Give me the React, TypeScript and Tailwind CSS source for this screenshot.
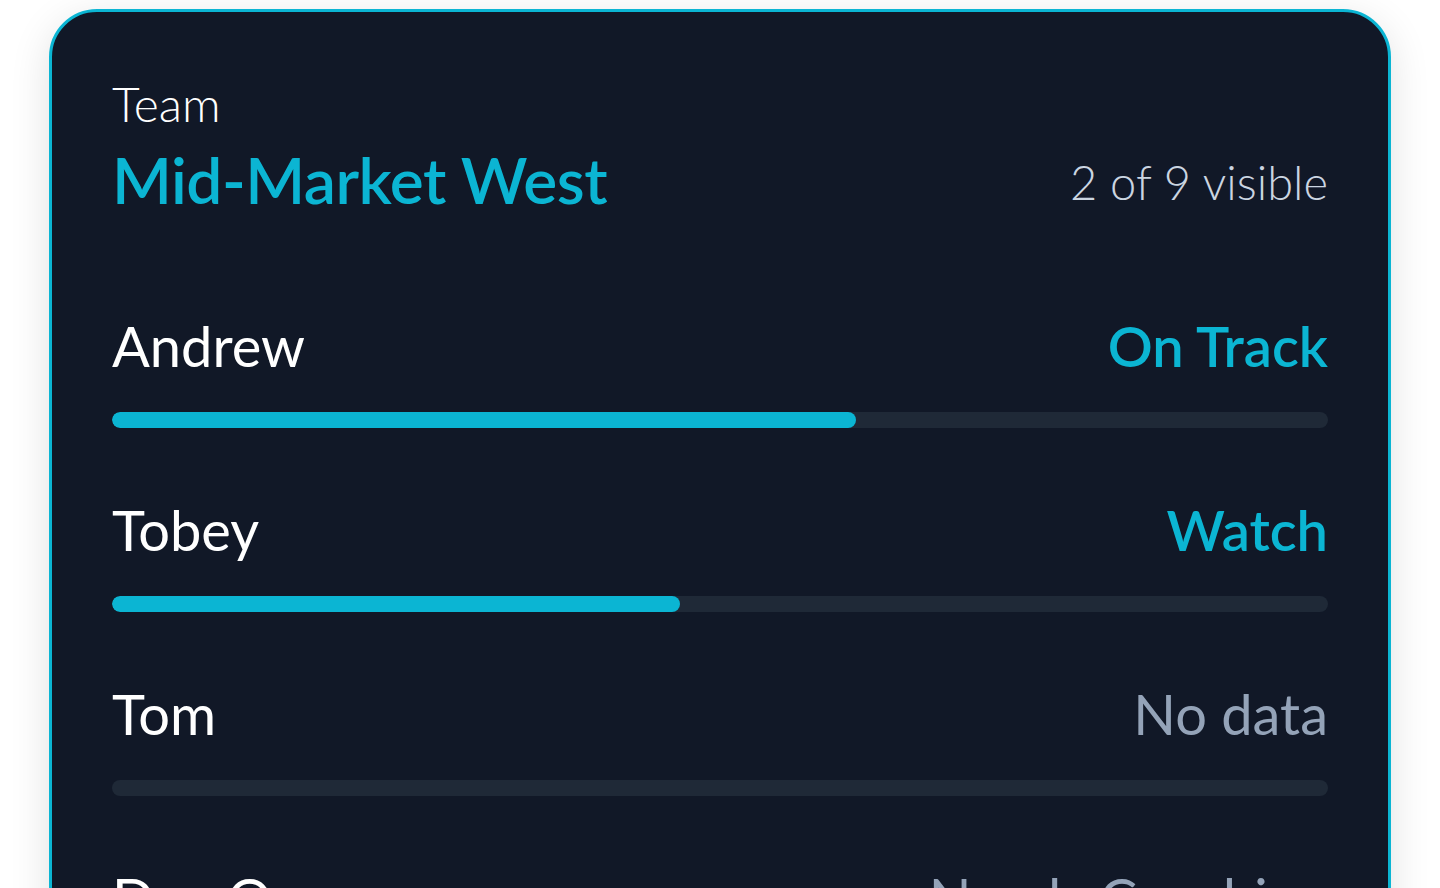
import React from "react";

type Row = { name: string; status: string; tone: "cyan" | "muted"; pct: number };

const rows: Row[] = [
  { name: "Andrew", status: "On Track", tone: "cyan", pct: 61.2 },
  { name: "Tobey", status: "Watch", tone: "cyan", pct: 46.7 },
  { name: "Tom", status: "No data", tone: "muted", pct: 0 },
  { name: "Dan Orr", status: "Needs Coaching", tone: "muted", pct: 0 },
];

export default function App() {
  return (
    <div
      className="h-[888px] w-[1440px] overflow-hidden bg-white"
      style={{ fontFamily: "Lato, 'Noto Sans', sans-serif" }}
    >
      <div className="mx-[49px] mt-[9px] rounded-[48px] border-[3px] border-[#0bb5d3] bg-[#111827] px-[60px] pt-[68px] pb-[60px] shadow-[0_10px_40px_rgba(0,0,0,0.12)]">
        <div className="text-[48px] leading-[48px] font-light text-white">Team</div>
        <div className="mt-[20px] flex items-end justify-between">
          <div className="text-[64px] leading-[64px] font-semibold text-[#0bb5d3] tracking-[-0.5px]">
            Mid-Market West
          </div>
          <div className="mb-[6px] text-[47px] leading-[47px] font-light text-[#cbd5e1]">2 of 9 visible</div>
        </div>
        <div className="mt-[104px] flex flex-col gap-[72px]">
          {rows.map((r) => (
            <div key={r.name} className="flex flex-col gap-[36px]">
              <div className="flex items-baseline justify-between">
                <div className="text-[56px] leading-[60px] text-white">{r.name}</div>
                <div
                  className={
                    r.tone === "cyan"
                      ? "text-[56px] leading-[60px] font-semibold text-[#0bb5d3]"
                      : "text-[56px] leading-[60px] text-[#94a3b8]"
                  }
                >
                  {r.status}
                </div>
              </div>
              <div className="h-[16px] w-full overflow-hidden rounded-full bg-[#1f2937]">
                <div className="h-full rounded-full bg-[#0bb5d3]" style={{ width: `${r.pct}%` }} />
              </div>
            </div>
          ))}
        </div>
      </div>
    </div>
  );
}
